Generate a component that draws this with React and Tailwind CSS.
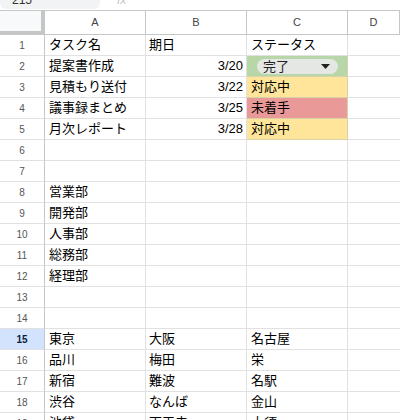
import React from 'react';

const rows = [
  ['タスク名', '期日', 'ステータス'],
  ['提案書作成', '3/20', 'chip'],
  ['見積もり送付', '3/22', '対応中'],
  ['議事録まとめ', '3/25', '未着手'],
  ['月次レポート', '3/28', '対応中'],
  ['', '', ''],
  ['', '', ''],
  ['営業部', '', ''],
  ['開発部', '', ''],
  ['人事部', '', ''],
  ['総務部', '', ''],
  ['経理部', '', ''],
  ['', '', ''],
  ['', '', ''],
  ['東京', '大阪', '名古屋'],
  ['品川', '梅田', '栄'],
  ['新宿', '難波', '名駅'],
  ['渋谷', 'なんば', '金山'],
  ['池袋', '天王寺', '大須'],
];

const statusBg = {
  chip: 'bg-[#b7d7a8]',
  '対応中': 'bg-[#ffe599]',
  '未着手': 'bg-[#ea9999]',
};

const font = { fontFamily: '"Liberation Sans", "Noto Sans CJK JP", sans-serif' };

const StatusChip = () => (
  <div className="flex items-center justify-between h-[15px] w-[81px] ml-[10px] rounded-full bg-[#e4e7e4] pl-[6px] pr-[8px]">
    <span className="text-[13px] leading-none text-[#222]">完了</span>
    <svg width="9" height="5" viewBox="0 0 9 5">
      <path d="M0 0 L9 0 L4.5 5 Z" fill="#222" />
    </svg>
  </div>
);

export default function App() {
  return (
    <div className="w-[400px] h-[420px] overflow-hidden bg-white" style={font}>
      {/* formula bar strip, scrolled mostly out of view */}
      <div className="h-[11px] flex items-start border-b border-[#c7c7c7]">
        <div className="w-[100px] h-[9px] bg-[#f1f3f4] rounded-b-[6px] overflow-hidden flex items-start pl-[12px]">
          <span className="text-[12px] leading-[12px] text-[#333] mt-[-6px]">215</span>
        </div>
        <div className="ml-[17px] h-[9px] overflow-hidden flex items-start">
          <span className="text-[12px] italic leading-[12px] text-[#c4c4c4] mt-[-6px]">fx</span>
        </div>
      </div>

      {/* column headers */}
      <div className="grid grid-cols-[45px_101px_101px_101px_1fr] h-[24px]">
        <div className="bg-[#f8f9fa] border-r-4 border-b-4 border-[#c4c7c5]" />
        {['A', 'B', 'C', 'D'].map((c) => (
          <div
            key={c}
            className="flex items-center justify-center pb-[1px] text-[11px] text-[#444] border-r border-b border-[#c4c7c5]"
          >
            {c}
          </div>
        ))}
      </div>

      {/* rows */}
      {rows.map((r, i) => {
        const n = i + 1;
        const selected = n === 15;
        const isStatus = n >= 2 && n <= 5;
        return (
          <div key={n} className="grid grid-cols-[45px_101px_101px_101px_1fr] h-[21px]">
            <div
              className={`flex items-center justify-center text-[10px] border-b border-[#e1e1e1] border-r border-r-[#c4c7c5] ${
                selected ? 'bg-[#d3e3fd] font-bold text-[#0b1f3f]' : 'text-[#555]'
              }`}
            >
              {n}
            </div>
            <div className="flex items-center px-[4px] text-[13px] text-black border-r border-b border-[#e1e1e1] whitespace-nowrap overflow-hidden">
              {r[0]}
            </div>
            <div
              className={`flex items-center px-[3px] text-[13px] text-black border-r border-b border-[#e1e1e1] whitespace-nowrap overflow-hidden ${
                /^\d/.test(r[1]) ? 'justify-end' : ''
              }`}
            >
              {r[1]}
            </div>
            <div
              className={`flex items-center text-[13px] text-black border-r border-b whitespace-nowrap overflow-hidden ${
                isStatus ? `${statusBg[r[2]]} border-[#d9d2a8]` : 'border-[#e1e1e1] px-[4px]'
              }`}
            >
              {r[2] === 'chip' ? <StatusChip /> : <span className={isStatus ? 'px-[4px]' : ''}>{r[2]}</span>}
            </div>
            <div className="border-b border-[#e1e1e1]" />
          </div>
        );
      })}
    </div>
  );
}
